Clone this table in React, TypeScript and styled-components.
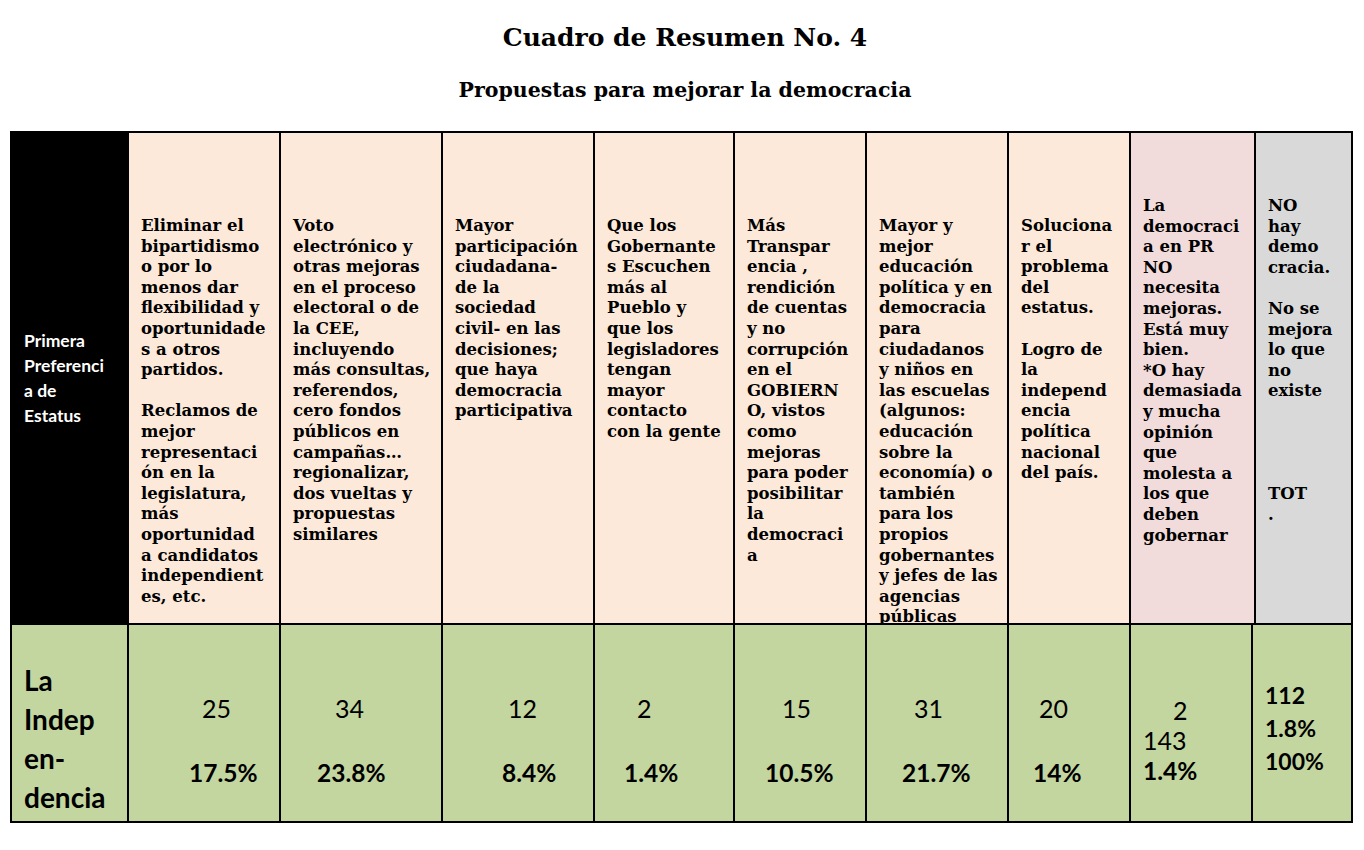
import React from "react";
import styled, { createGlobalStyle } from "styled-components";

const GlobalStyle = createGlobalStyle`
  body {
    margin: 0;
    background: #ffffff;
  }
`;

const PEACH = "#fde9d9";
const PINK = "#f2dcdb";
const GRAY = "#d9d9d9";
const GREEN = "#c3d69f";

const Page = styled.div`
  width: 1364px;
  padding-top: 23px;
  box-sizing: border-box;
`;

const Heading = styled.header`
  display: flex;
  flex-direction: column;
  align-items: center;
  padding-left: 6px;
  font-family: "DejaVu Serif", "Liberation Serif", serif;
  font-weight: bold;
  color: #000;
`;

const Title = styled.h1`
  margin: 0;
  font-size: 25px;
  line-height: 30px;
`;

const Subtitle = styled.h2`
  margin: 25px 0 0;
  font-size: 20.5px;
  line-height: 24px;
`;

const Table = styled.div`
  margin: 29px 0 0 10px;
  width: 1343px;
  box-sizing: border-box;
  padding: 2px;
  background: #000;
  display: grid;
  row-gap: 2px;
`;

const Row = styled.div<{ $cols: string; $height: number }>`
  display: grid;
  grid-template-columns: ${(p) => p.$cols};
  column-gap: 2px;
  height: ${(p) => p.$height}px;
`;

const StatusHead = styled.div`
  background: #000;
  color: #fff;
  display: flex;
  align-items: center;
  padding-left: 12px;
  font-family: Lato, "Open Sans", sans-serif;
  font-weight: bold;
  font-size: 17.5px;
  line-height: 25px;
  white-space: pre;
`;

const ProposalCell = styled.div<{ $bg: string; $top: number }>`
  background: ${(p) => p.$bg};
  padding: ${(p) => p.$top}px 0 0 12px;
  overflow: hidden;
  font-family: "DejaVu Serif", "Liberation Serif", serif;
  font-weight: bold;
  font-size: 16.5px;
  line-height: 20.6px;
  color: #000;
  white-space: pre;
`;

const StatusName = styled.div`
  background: ${GREEN};
  padding: 36px 0 0 12px;
  font-family: Lato, "Open Sans", sans-serif;
  font-weight: bold;
  font-size: 28px;
  line-height: 39px;
  color: #000;
  white-space: pre;
`;

const ResultCell = styled.div<{ $top: number }>`
  background: ${GREEN};
  padding-top: ${(p) => p.$top}px;
  display: flex;
  flex-direction: column;
  font-family: Lato, "Open Sans", sans-serif;
  color: #000;
`;

const Figure = styled.div<{ $x: number; $bold?: boolean; $size: number; $lh: number; $mt?: number }>`
  padding-left: ${(p) => p.$x}px;
  margin-top: ${(p) => p.$mt ?? 0}px;
  font-size: ${(p) => p.$size}px;
  line-height: ${(p) => p.$lh}px;
  font-weight: ${(p) => (p.$bold ? "bold" : "normal")};
  white-space: nowrap;
`;

const proposals = [
  {
    bg: PEACH,
    top: 83,
    text: `Eliminar el
bipartidismo
o por lo
menos dar
flexibilidad y
oportunidade
s a otros
partidos.

Reclamos de
mejor
representaci
ón en la
legislatura,
más
oportunidad
a candidatos
independient
es, etc.`,
  },
  {
    bg: PEACH,
    top: 83,
    text: `Voto
electrónico y
otras mejoras
en el proceso
electoral o de
la CEE,
incluyendo
más consultas,
referendos,
cero fondos
públicos en
campañas…
regionalizar,
dos vueltas y
propuestas
similares`,
  },
  {
    bg: PEACH,
    top: 83,
    text: `Mayor
participación
ciudadana-
de la
sociedad
civil- en las
decisiones;
que haya
democracia
participativa`,
  },
  {
    bg: PEACH,
    top: 83,
    text: `Que los
Gobernante
s Escuchen
más al
Pueblo y
que los
legisladores
tengan
mayor
contacto
con la gente`,
  },
  {
    bg: PEACH,
    top: 83,
    text: `Más
Transpar
encia ,
rendición
de cuentas
y no
corrupción
en el
GOBIERN
O, vistos
como
mejoras
para poder
posibilitar
la
democraci
a`,
  },
  {
    bg: PEACH,
    top: 83,
    text: `Mayor y
mejor
educación
política y en
democracia
para
ciudadanos
y niños en
las escuelas
(algunos:
educación
sobre la
economía) o
también
para los
propios
gobernantes
y jefes de las
agencias
públicas`,
  },
  {
    bg: PEACH,
    top: 83,
    text: `Soluciona
r el
problema
del
estatus.

Logro de
la
independ
encia
política
nacional
del país.`,
  },
  {
    bg: PINK,
    top: 63,
    text: `La
democraci
a en PR
NO
necesita
mejoras.
Está muy
bien.
*O hay
demasiada
y mucha
opinión
que
molesta a
los que
deben
gobernar`,
  },
  {
    bg: GRAY,
    top: 63,
    text: `NO
hay
demo
cracia.

No se
mejora
lo que
no
existe




TOT
.`,
  },
];

const results = [
  { count: "25", countX: 73, pct: "17.5%", pctX: 60 },
  { count: "34", countX: 54, pct: "23.8%", pctX: 36 },
  { count: "12", countX: 65, pct: "8.4%", pctX: 59 },
  { count: "2", countX: 42, pct: "1.4%", pctX: 29 },
  { count: "15", countX: 47, pct: "10.5%", pctX: 30 },
  { count: "31", countX: 47, pct: "21.7%", pctX: 35 },
  { count: "20", countX: 30, pct: "14%", pctX: 24 },
];

const HEAD_COLS = "115px 150px 160px 150px 138px 130px 140px 120px 123px 95px";
const BODY_COLS = "115px 150px 160px 150px 138px 130px 140px 120px 120px 98px";

const App: React.FC = () => {
  return (
    <Page>
      <GlobalStyle />
      <Heading>
        <Title>Cuadro de Resumen No. 4</Title>
        <Subtitle>Propuestas para mejorar la democracia</Subtitle>
      </Heading>

      <Table>
        <Row $cols={HEAD_COLS} $height={490}>
          <StatusHead>{`Primera\nPreferenci\na de\nEstatus`}</StatusHead>
          {proposals.map((p, i) => (
            <ProposalCell key={i} $bg={p.bg} $top={p.top}>
              {p.text}
            </ProposalCell>
          ))}
        </Row>

        <Row $cols={BODY_COLS} $height={196}>
          <StatusName>{`La\nIndep\nen-\ndencia`}</StatusName>
          {results.map((r, i) => (
            <ResultCell key={i} $top={68}>
              <Figure $x={r.countX} $size={25} $lh={30}>
                {r.count}
              </Figure>
              <Figure $x={r.pctX} $size={24.5} $lh={30} $mt={35} $bold>
                {r.pct}
              </Figure>
            </ResultCell>
          ))}
          <ResultCell $top={70}>
            <Figure $x={42} $size={25} $lh={30}>
              2
            </Figure>
            <Figure $x={12} $size={25} $lh={30}>
              143
            </Figure>
            <Figure $x={12} $size={24.5} $lh={30} $mt={1} $bold>
              1.4%
            </Figure>
          </ResultCell>
          <ResultCell $top={54}>
            <Figure $x={12} $size={23} $lh={33} $bold>
              112
            </Figure>
            <Figure $x={12} $size={23} $lh={33} $bold>
              1.8%
            </Figure>
            <Figure $x={12} $size={23} $lh={33} $bold>
              100%
            </Figure>
          </ResultCell>
        </Row>
      </Table>
    </Page>
  );
};

export default App;
